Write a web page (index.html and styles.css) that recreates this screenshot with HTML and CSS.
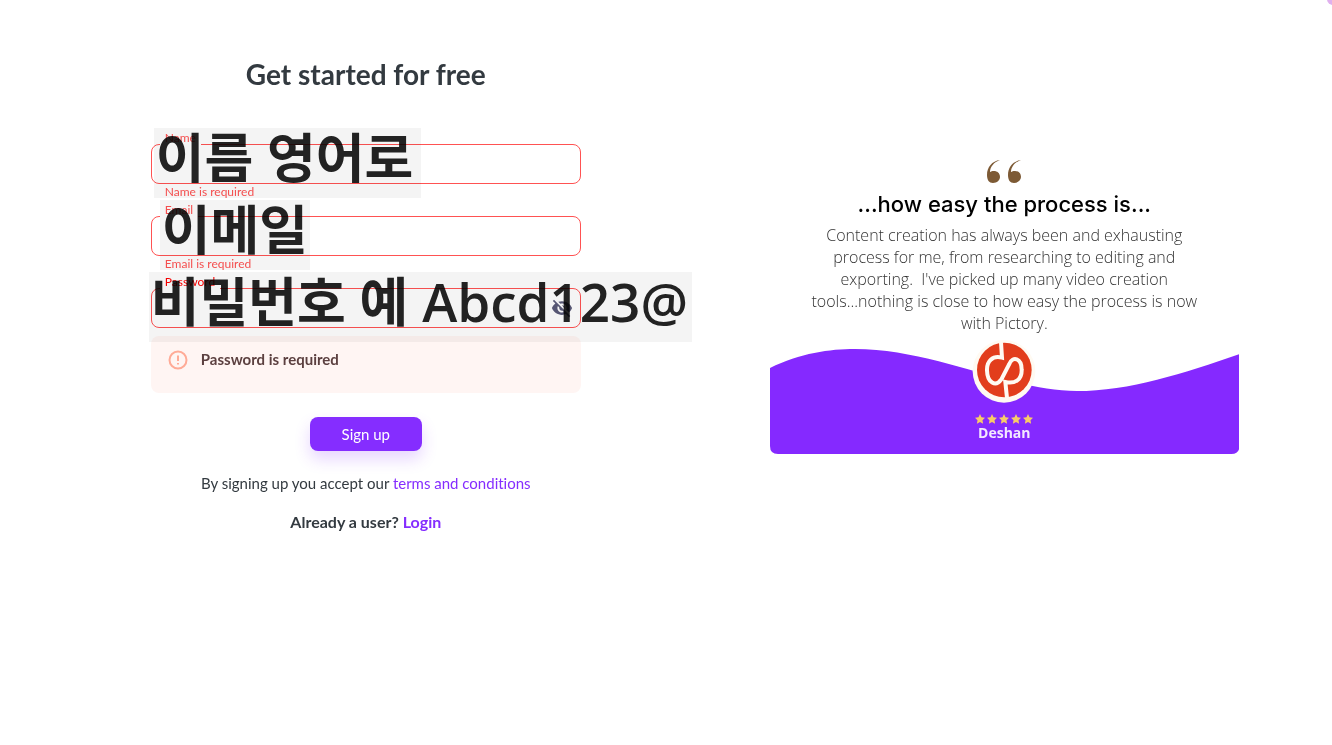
FILE: index.html
```html
<!DOCTYPE html>
<html lang="en">
<head>
  <meta charset="UTF-8">
  <meta name="viewport" content="width=device-width, initial-scale=1">
  <title>Sign up</title>
  <link rel="stylesheet" href="styles.css">
</head>
<body>
  <div class="page">
    <main class="signup">
      <form class="signup-form">
        <h1>Get started for free</h1>

        <div class="field">
          <input type="text" id="name" name="name">
          <label for="name">Name</label>
          <p class="field-error">Name is required</p>
          <span class="note note-name" lang="ko">이름 영어로</span>
        </div>

        <div class="field">
          <input type="email" id="email" name="email">
          <label for="email">Email</label>
          <p class="field-error">Email is required</p>
          <span class="note note-email" lang="ko">이메일</span>
        </div>

        <div class="field field-password">
          <input type="password" id="password" name="password">
          <label for="password">Password</label>
          <button type="button" class="toggle" aria-label="Show password">
            <svg viewBox="0 0 24 24" width="22" height="22"><path d="M12 7c2.76 0 5 2.24 5 5 0 .65-.13 1.26-.36 1.83l2.92 2.92c1.51-1.26 2.7-2.89 3.43-4.75-1.73-4.39-6-7.5-11-7.5-1.4 0-2.74.25-3.98.7l2.16 2.16C10.74 7.13 11.35 7 12 7zM2 4.27l2.28 2.28.46.46C3.08 8.3 1.78 10.02 1 12c1.73 4.39 6 7.5 11 7.5 1.55 0 3.03-.3 4.38-.84l.42.42L19.73 22 21 20.73 3.27 3 2 4.27zM7.53 9.8l1.55 1.55c-.05.21-.08.43-.08.65 0 1.66 1.34 3 3 3 .22 0 .44-.03.65-.08l1.55 1.55c-.67.33-1.41.53-2.2.53-2.76 0-5-2.24-5-5 0-.79.2-1.53.53-2.2zm4.31-.78l3.15 3.15.02-.16c0-1.66-1.34-3-3-3l-.17.01z"/></svg>
          </button>
          <span class="note note-password" lang="ko">비밀번호 예 Abcd123@</span>
        </div>

        <div class="alert" role="alert">
          <svg viewBox="0 0 20 20" width="20" height="20">
            <circle cx="10" cy="10" r="8.5"/>
            <path d="M10 5.500v5.500M10 13v1.500"/>
          </svg>
          <span>Password is required</span>
        </div>

        <button type="submit" class="btn">Sign up</button>

        <p class="terms">By signing up you accept our <a href="#">terms and conditions</a></p>
        <p class="login">Already a user? <a href="#">Login</a></p>
      </form>
    </main>

    <aside class="testimonial">
      <svg class="quote" viewBox="0 0 36 24" width="36" height="24">
        <path id="q" d="M14 0C6 1 1 7 1 15c0 5 2 8 6 8s7-3 7-6c0-4-3-6-6-6-2 0-3 .5-4 1C4 7 8 2 14 0z"/>
        <use href="#q" x="21"/>
      </svg>
      <h2>...how easy the process is...</h2>
      <p class="testimonial-text">Content creation has always been and exhausting process for me, from researching to editing and exporting.&nbsp; I've picked up many video creation tools...nothing is close to how easy the process is now with Pictory.</p>
      <div class="author">
        <svg class="wave" viewBox="0 0 470 106" preserveAspectRatio="none">
          <path d="M0 20C30 5 60 1 85 1C165 1 240 43 307 43C360 43 415 25 470 6V98Q470 106 462 106H8Q0 106 0 98Z"/>
        </svg>
        <svg class="avatar" viewBox="94 26 192 192" width="64" height="64">
          <circle cx="190" cy="123" r="94" fill="#fffaf2"/>
          <circle cx="191" cy="119" r="82" fill="#e23d1c"/>
          <path d="M181 36L184 82C155 74 138 94 139 120C140 158 165 171 182 147L206 101C216 76 243 84 243 118C244 146 225 162 194 155L199 203" fill="none" stroke="#fffaf2" stroke-width="12"/>
        </svg>
        <svg class="stars" viewBox="0 0 58 10" width="58" height="10">
          <path id="star" d="M5 0L6.5 3.2 10 3.7 7.5 6.2 8.1 9.8 5 8.1 1.9 9.8 2.5 6.2 0 3.7 3.5 3.2z"/>
          <use href="#star" x="12"/>
          <use href="#star" x="24"/>
          <use href="#star" x="36"/>
          <use href="#star" x="48"/>
        </svg>
        <span class="author-name">Deshan</span>
      </div>
    </aside>
    <div class="corner"></div>
  </div>
</body>
</html>
```

FILE: styles.css
```css
* {
  box-sizing: border-box;
}

body {
  margin: 0;
  background-color: #fff;
  color: #333a40;
  font-family: Lato, sans-serif;
  font-size: 16px;
  font-variant-ligatures: none;
}

h1, h2, p {
  margin: 0;
}

a {
  color: #852dff;
  text-decoration: none;
}

.page {
  display: flex;
  min-height: 100vh;
  position: relative;
  overflow: hidden;
}

.signup {
  flex: 0 0 55%;
  display: flex;
  justify-content: center;
  align-items: flex-start;
  padding: 56px 25px 24px 24px;
}

.signup-form {
  display: flex;
  flex-direction: column;
  width: 100%;
  max-width: 430px;
}

h1 {
  margin-bottom: 52px;
  font-size: 28px;
  line-height: 36px;
  font-weight: 700;
  text-align: center;
}

.field {
  position: relative;
  height: 72px;
}

.field input {
  display: block;
  width: 100%;
  height: 40px;
  padding: 0 14px;
  border: 1px solid #ff5252;
  border-radius: 8px;
  background-color: #fff;
  font: inherit;
}

.field label {
  position: absolute;
  top: -13px;
  left: 9px;
  padding: 0 5px;
  background-color: #fff;
  color: #ff5252;
  font-size: 12px;
  line-height: 14px;
}

.field-error {
  padding-left: 14px;
  color: #ff5252;
  font-size: 12px;
  line-height: 16px;
}

.field-password {
  height: 48px;
}

.field-password label {
  color: #f00;
}

.toggle {
  position: absolute;
  top: 9px;
  right: 8px;
  padding: 0;
  border: 0;
  background: none;
  line-height: 0;
}

.toggle svg {
  fill: #5a5a78;
}

/* hints that lie over the fields */
.note {
  position: absolute;
  top: -16px;
  z-index: 1;
  height: 70px;
  background-color: #f4f4f4;
  color: #222;
  font-family: "Open Sans", "Noto Sans CJK KR", sans-serif;
  font-size: 53px;
  line-height: 60px;
  font-weight: 600;
  white-space: nowrap;
  mix-blend-mode: multiply;
  pointer-events: none;
}

.note-name {
  left: 3px;
  padding: 0 8px 0 2px;
}

.note-email {
  left: 9px;
  padding: 0 2px;
}

.note-password {
  left: -2px;
  padding: 0 4px 0 2px;
}

.alert {
  display: flex;
  align-items: flex-start;
  gap: 13px;
  height: 57px;
  padding: 14px 17px;
  border-radius: 8px;
  background-color: #fff5f3;
  color: #5c4040;
  font-size: 15px;
  line-height: 19px;
  font-weight: 700;
}

.alert svg {
  fill: none;
  stroke: #ffab97;
  stroke-width: 2;
}

.btn {
  align-self: center;
  width: 112px;
  height: 34px;
  margin: 24px 0 23px;
  border: 0;
  border-radius: 8px;
  background-color: #852dff;
  box-shadow: 0 8px 16px rgba(133, 45, 255, 0.2);
  color: #fff;
  font-family: inherit;
  font-size: 15px;
}

.terms,
.login {
  font-size: 15px;
  line-height: 18px;
  text-align: center;
}

.login {
  margin-top: 21px;
  font-size: 16px;
  font-weight: 700;
}

.testimonial {
  flex: 1;
  display: flex;
  flex-direction: column;
  align-items: center;
  padding: 160px 93px 24px 37px;
}

.quote {
  fill: #7d5a35;
}

h2 {
  margin-top: 6px;
  color: #000;
  font-family: Inter, sans-serif;
  font-size: 22px;
  line-height: 28px;
  font-weight: 500;
  white-space: nowrap;
}

.testimonial-text {
  max-width: 390px;
  margin-top: 6px;
  color: #333;
  font-family: "Open Sans", sans-serif;
  font-size: 16px;
  line-height: 22px;
  font-weight: 300;
  text-align: center;
}

.author {
  position: relative;
  display: flex;
  flex-direction: column;
  align-items: center;
  width: 100%;
  height: 120px;
  padding-top: 5px;
}

.wave {
  position: absolute;
  bottom: 0;
  left: 0;
  width: 100%;
  height: 106px;
  fill: #8529ff;
}

.avatar,
.stars,
.author-name {
  position: relative;
}

.stars {
  margin-top: 11px;
  fill: #f8cb68;
}

.author-name {
  color: #f3e8ff;
  font-family: "Open Sans", sans-serif;
  font-size: 14px;
  line-height: 17px;
  font-weight: 700;
}

.corner {
  position: absolute;
  top: -7px;
  right: -7px;
  width: 12px;
  height: 12px;
  border-radius: 50%;
  background-color: #e0b0ee;
}
```
